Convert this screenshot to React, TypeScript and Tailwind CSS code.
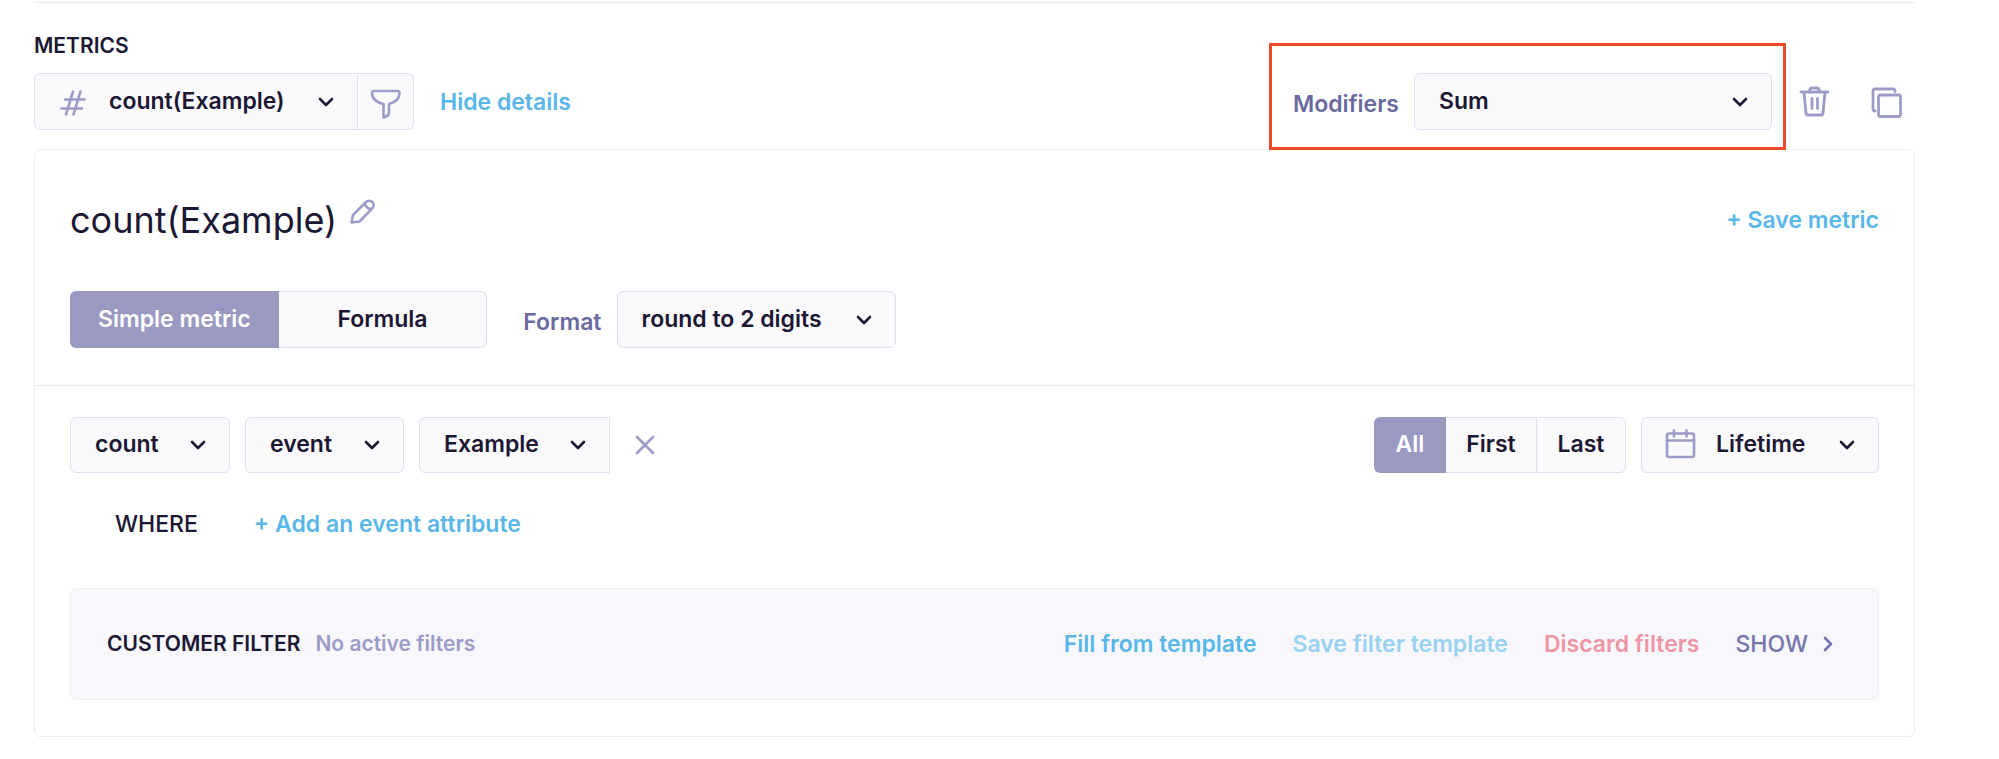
import type { ReactNode } from "react";

interface SelectProps {
  id: string;
  label: string;
  value: string;
  className: string;
  showLabel?: boolean;
  children?: ReactNode;
}

function ChevronIcon() {
  return (
    <svg
      className="pointer-events-none absolute right-6 top-1/2 h-4 w-4 -translate-y-1/2"
      viewBox="0 0 16 16"
      fill="none"
      stroke="#1c1733"
      strokeWidth="2.6"
      strokeLinecap="round"
      strokeLinejoin="round"
    >
      <path d="M2 5l6 6 6-6" />
    </svg>
  );
}

function Select({ id, label, value, className, showLabel, children }: SelectProps) {
  return (
    <div className="flex items-center gap-[15px]">
      {showLabel && (
        <label htmlFor={id} className="mt-1 text-[#6a6a9f]">
          {label}
        </label>
      )}
      <div className="relative">
        <select
          id={id}
          aria-label={label}
          defaultValue={value}
          className={`block appearance-none border border-[#dfe0f0] bg-[#fafafd] pb-0.5 ${className}`}
        >
          <option value={value}>{value}</option>
        </select>
        {children}
        <ChevronIcon />
      </div>
    </div>
  );
}

function HashIcon() {
  return (
    <svg
      className="pointer-events-none absolute left-6 top-1/2 h-8 w-8 -translate-y-1/2"
      viewBox="0 0 32 32"
      fill="none"
      stroke="#9c9cc8"
      strokeWidth="2.6"
      strokeLinecap="round"
    >
      <path d="M15 5.5L8 28.5M22.5 5.5l-7 23M7 13.5h19.5M3.5 22.5h20.5" />
    </svg>
  );
}

function FilterIcon() {
  return (
    <svg className="h-9 w-9" viewBox="0 0 36 36" fill="none" stroke="#9c9cc8" strokeWidth="2.6" strokeLinejoin="round">
      <path d="M5.5 7h24q2 0 2 2c0 6-5 9.5-10.5 11v9c0 2-2 3.5-5.5 4.5V20C9 18.5 4 15 4 9q0-2 1.5-2z" />
    </svg>
  );
}

function TrashIcon() {
  return (
    <svg
      className="h-8 w-8"
      viewBox="0 0 32 32"
      fill="none"
      stroke="#9c9cc8"
      strokeWidth="2.8"
      strokeLinecap="round"
      strokeLinejoin="round"
    >
      <path d="M2 6h27M10.5 6c0-3 1-4 3-4h4c2 0 3 1 3 4M5 6l2 21q0 2 2 2h13q2 0 2-2l2-21M13 12.5v10M18.5 12.5v10" />
    </svg>
  );
}

function CopyIcon() {
  return (
    <svg
      className="h-8 w-8"
      viewBox="0 0 32 32"
      fill="none"
      stroke="#9c9cc8"
      strokeWidth="2.8"
      strokeLinecap="round"
      strokeLinejoin="round"
    >
      <rect x="7.5" y="9" width="22" height="21.5" rx="2" />
      <path d="M24 5.5V5q0-2-2-2H4q-2 0-2 2v18q0 2 2 2" />
    </svg>
  );
}

function PencilIcon() {
  return (
    <svg className="h-7 w-7" viewBox="0 0 28 28" fill="none" stroke="#9c9cc8" strokeWidth="2.6" strokeLinejoin="round">
      <path d="M2.5 24.5l1.5-7.5L17 4a4.4 4.4 0 0 1 6.3 6.3L10.5 23.5zM16 5c0 3.500 2.500 6 6.500 6" />
    </svg>
  );
}

function CalendarIcon() {
  return (
    <svg
      className="pointer-events-none absolute left-6 top-1/2 h-8 w-8 -translate-y-1/2"
      viewBox="0 0 32 32"
      fill="none"
      stroke="#9c9cc8"
      strokeWidth="2.6"
      strokeLinecap="round"
    >
      <rect x="2" y="4.5" width="27" height="23.5" rx="2" />
      <path d="M2 11.5h27M9 1.5v6M21.5 1.5v6" />
    </svg>
  );
}

export default function App() {
  return (
    <main className="bg-white pl-[34px] pr-[84px] pt-0.5 font-['Inter',sans-serif] text-[23px] font-semibold leading-[30px] text-[#1c1733]">
      <section className="border-t border-[#e9e9f5] pt-7">
        <h2 className="text-[21px]">METRICS</h2>

        <div className="mt-3 flex items-center justify-between">
          <div className="flex items-center">
            <Select id="metric" label="Metric" value="count(Example)" className="h-[57px] rounded-l-md pl-[74px] pr-[72px]">
              <HashIcon />
            </Select>
            <button
              aria-label="Filter metric"
              className="flex h-[57px] w-14 items-center justify-center rounded-r-md border border-l-0 border-[#dfe0f0] bg-[#fafafd]"
            >
              <FilterIcon />
            </button>
            <button className="ml-[26px] text-[#58b7e8]">Hide details</button>
          </div>

          <div className="flex items-center">
            <div className="relative">
              <Select
                id="modifiers"
                label="Modifiers"
                value="Sum"
                showLabel
                className="h-[57px] w-[358px] rounded-md pl-6"
              />
              <div className="pointer-events-none absolute -bottom-5 -left-6 -right-[14px] -top-[30px] border-[3px] border-[#ee4b2b]" />
            </div>
            <button aria-label="Delete metric" className="ml-[27px]">
              <TrashIcon />
            </button>
            <button aria-label="Duplicate metric" className="ml-10 mr-3">
              <CopyIcon />
            </button>
          </div>
        </div>

        <div className="mt-[19px] rounded-md border border-[#ececf6]">
          <div className="border-b border-[#e9e9f2] px-[35px] pb-[37px] pt-12">
            <div className="flex items-center justify-between">
              <div className="flex items-start gap-3">
                <h1 className="text-[36px] font-normal leading-[44px]">count(Example)</h1>
                <button aria-label="Rename metric">
                  <PencilIcon />
                </button>
              </div>
              <button className="text-[#58b7e8]">+ Save metric</button>
            </div>

            <div className="mt-[49px] flex items-center">
              <div className="mr-9 grid grid-cols-2">
                <button className="h-[57px] rounded-l-md bg-[#9999c1] px-7 pb-0.5 text-white">Simple metric</button>
                <button className="h-[57px] rounded-r-md border border-l-0 border-[#dfe0f0] bg-[#fafafd] pb-0.5">Formula</button>
              </div>
              <Select
                id="format"
                label="Format"
                value="round to 2 digits"
                showLabel
                className="h-[57px] rounded-md pl-6 pr-[72px]"
              />
            </div>
          </div>

          <div className="px-[35px] pb-9 pt-[31px]">
            <div className="flex items-center justify-between">
              <div className="flex items-center gap-[15px]">
                <Select id="aggregate" label="Aggregate" value="count" className="h-14 rounded-md pl-6 pr-[70px]" />
                <Select id="source" label="Source" value="event" className="h-14 rounded-md pl-6 pr-[70px]" />
                <Select id="event" label="Event" value="Example" className="h-14 rounded-l-md pl-6 pr-[70px]" />
                <button aria-label="Remove event" className="ml-2">
                  <svg className="h-6 w-6" viewBox="0 0 24 24" stroke="#9c9cc8" strokeWidth="2.6" strokeLinecap="round">
                    <path d="M4 4l16 16M20 4L4 20" />
                  </svg>
                </button>
              </div>
              <div className="flex items-center gap-[15px]">
                <div className="flex">
                  <button className="h-14 w-[72px] rounded-l-md bg-[#9999c1] pb-0.5 text-white">All</button>
                  <button className="h-14 w-[90px] border-y border-[#dfe0f0] bg-[#fafafd] pb-0.5">First</button>
                  <button className="h-14 w-[90px] rounded-r-md border border-[#dfe0f0] bg-[#fafafd] pb-0.5">Last</button>
                </div>
                <Select id="period" label="Period" value="Lifetime" className="h-14 rounded-md pl-[74px] pr-[72px]">
                  <CalendarIcon />
                </Select>
              </div>
            </div>

            <div className="mt-9 flex items-center gap-14 pl-[45px]">
              <span className="font-medium">WHERE</span>
              <button className="text-[#58b7e8]">+ Add an event attribute</button>
            </div>

            <div className="mt-[49px] flex items-center justify-between rounded-md border border-[#f0f0f7] bg-[#f7f7fc] px-9 py-10">
              <div className="flex items-center gap-[15px] text-[21px]">
                <h3>CUSTOMER FILTER</h3>
                <span className="text-[#9c9cc8]">No active filters</span>
              </div>
              <div className="flex items-center gap-9">
                <button className="text-[#58b7e8]">Fill from template</button>
                <button className="text-[#98d2f1]">Save filter template</button>
                <button className="text-[#ee95a6]">Discard filters</button>
                <button className="mr-1.5 flex items-center gap-3 font-medium text-[#7575ad]">
                  SHOW
                  <svg
                    className="h-4 w-4"
                    viewBox="0 0 16 16"
                    fill="none"
                    stroke="currentColor"
                    strokeWidth="2.6"
                    strokeLinecap="round"
                    strokeLinejoin="round"
                  >
                    <path d="M5 2l6 6-6 6" />
                  </svg>
                </button>
              </div>
            </div>
          </div>
        </div>
      </section>
    </main>
  );
}
